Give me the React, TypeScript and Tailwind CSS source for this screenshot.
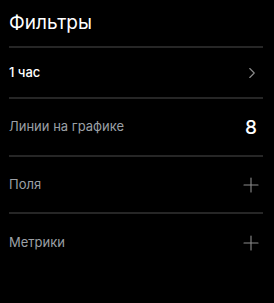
import { ChevronRight, Plus } from "lucide-react";

const rows = [
  { label: "1 час", h: "h-[51px]", kind: "chevron" as const, strong: true },
  { label: "Линии на графике", h: "h-[58px]", kind: "value" as const },
  { label: "Поля", h: "h-[57px]", kind: "plus" as const },
  { label: "Метрики", h: "h-[60px]", kind: "plus" as const },
];

export default function App() {
  return (
    <div className="w-[274px] h-[303px] bg-black pl-[9px] pr-[11px] font-['Inter',sans-serif]">
      <div className="h-[46px] pt-[10px] text-[19px] leading-[26px] font-normal text-white">
        Фильтры
      </div>
      <div className="flex flex-col">
        {rows.map((row) => (
          <div
            key={row.label}
            className={`flex items-center justify-between border-t-2 border-[#262626] ${row.h}`}
          >
            <span
              className={
                row.strong
                  ? "text-[13px] font-medium text-white"
                  : "text-[13px] text-[#9ca0a6]"
              }
            >
              {row.label}
            </span>
            {row.kind === "chevron" && (
              <ChevronRight size={18} strokeWidth={1.5} className="text-[#8c8c8c] mr-[2px]" />
            )}
            {row.kind === "value" && (
              <span className="text-[19px] font-medium text-white mr-[6px] leading-none">8</span>
            )}
            {row.kind === "plus" && (
              <Plus size={24} strokeWidth={1.1} className="text-[#8c8c8c]" />
            )}
          </div>
        ))}
      </div>
    </div>
  );
}
